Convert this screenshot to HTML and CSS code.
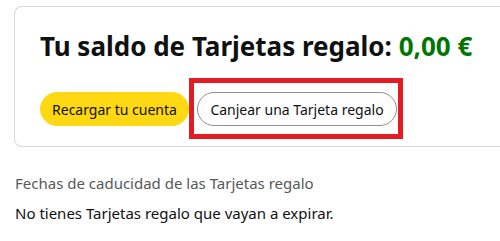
FILE: index.html
```html
<!DOCTYPE html>
<html lang="es">
<head>
<meta charset="utf-8">
<link rel="stylesheet" href="styles.css">
</head>
<body>
<div class="page">
  <section class="card">
    <h1 class="title">Tu saldo de Tarjetas regalo: <span class="amount">0,00 €</span></h1>
    <div class="actions">
      <button class="btn btn-primary">Recargar tu cuenta</button>
      <button class="btn btn-outline">Canjear una Tarjeta regalo</button>
      <span class="highlight"></span>
    </div>
  </section>
  <div class="expiry">
    <p class="expiry-label">Fechas de caducidad de las Tarjetas regalo</p>
    <p class="expiry-text">No tienes Tarjetas regalo que vayan a expirar.</p>
  </div>
</div>
</body>
</html>
```

FILE: styles.css
```css
html, body {
  margin: 0;
  padding: 0;
  background: #fff;
}
body {
  font-family: "Noto Sans", "Open Sans", Arial, sans-serif;
  color: #0f1111;
}
.page {
  padding: 6px 0 0 14px;
}
.card {
  box-sizing: border-box;
  border: 1px solid #d5d9d9;
  border-right: none;
  border-radius: 8px 0 0 8px;
  padding: 21px 0 0 25px;
  height: 141px;
}
.title {
  margin: 0;
  font-size: 26px;
  font-weight: 700;
  line-height: 36px;
  color: #0f1111;
  white-space: nowrap;
}
.amount {
  color: #007600;
}
.actions {
  position: relative;
  display: flex;
  gap: 8px;
  margin-top: 28px;
}
.btn {
  height: 34px;
  border-radius: 17px;
  font-family: inherit;
  font-size: 14px;
  color: #0f1111;
  padding: 0 10px;
  white-space: nowrap;
  box-sizing: border-box;
  cursor: pointer;
}
.btn-primary {
  background: #ffd814;
  border: 1px solid #ffd814;
  width: 149px;
}
.btn-outline {
  background: #fff;
  border: 1px solid #8d9090;
  width: 200px;
}
.highlight {
  position: absolute;
  left: 149px;
  top: -14px;
  width: 214px;
  height: 61px;
  box-sizing: border-box;
  border: 5px solid #e31b23;
}
.expiry {
  padding-left: 1px;
  margin-top: 26px;
}
.expiry p {
  margin: 0;
  font-size: 15px;
  line-height: 20px;
}
.expiry-label {
  color: #565959;
}
.expiry-text {
  margin-top: 10px !important;
  color: #0f1111;
}
```
